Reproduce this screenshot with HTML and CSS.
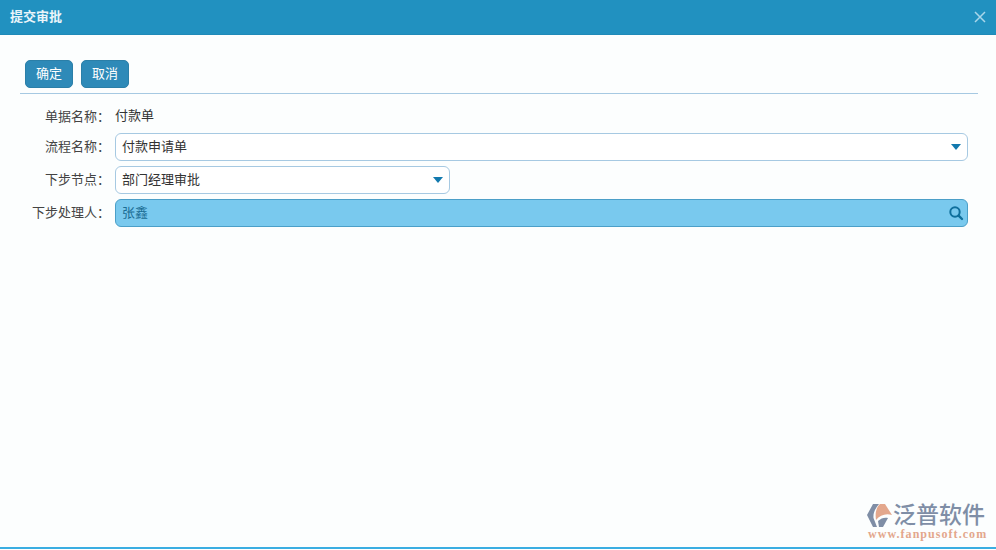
FILE: index.html
```html
<!DOCTYPE html>
<html lang="zh-CN">
<head>
  <meta charset="UTF-8" />
  <title>提交审批</title>
  <link rel="stylesheet" href="styles.css">
</head>
<body>
  <div class="dialog">
    <header class="titlebar">
      <span class="title">提交审批</span>
      <svg class="close" width="12" height="12" viewBox="0 0 12 12"><path d="M1 1 L11 11 M11 1 L1 11" stroke="#a9d6ea" stroke-width="1.5" fill="none"/></svg>
    </header>

    <div class="content">
      <div class="toolbar">
        <button class="btn">确定</button>
        <button class="btn">取消</button>
      </div>

      <div class="form">
        <div class="row row-text">
          <label>单据名称：</label>
          <span class="value">付款单</span>
        </div>
        <div class="row">
          <label>流程名称：</label>
          <div class="field">付款申请单<i class="arrow"></i></div>
        </div>
        <div class="row">
          <label>下步节点：</label>
          <div class="field field-short">部门经理审批<i class="arrow"></i></div>
        </div>
        <div class="row">
          <label>下步处理人：</label>
          <div class="field field-lookup">张鑫
            <svg class="search" width="16" height="16" viewBox="0 0 16 16"><circle cx="7" cy="7" r="4.7" stroke="#0f6f9c" stroke-width="2" fill="none"/><path d="M10.6 10.6 L14 14" stroke="#0f6f9c" stroke-width="2.4" stroke-linecap="round"/></svg>
          </div>
        </div>
      </div>
    </div>

    <div class="logo">
      <div class="logo-top">
        <svg width="27" height="25" viewBox="0 0 27 25">
          <path d="M7 1 H13 C9 6 7 10 7.5 15 L11 24 H7 L1 12 Z" fill="#7f8ea6"/>
          <path d="M14 1 H19 L26 12 C20 10 14 12 10 17 C9 10 10 5 14 1 Z" fill="#e3a78c"/>
          <path d="M12 18 C15 15 19 14 22 15 L17 24 H13 Z" fill="#7f8ea6"/>
        </svg>
        <span class="logo-name">泛普软件</span>
      </div>
      <div class="logo-url">www.fanpusoft.com</div>
    </div>
  </div>
</body>
</html>
```

FILE: styles.css
```css
html, body {
  margin: 0;
  height: 100%;
}
body {
  font-family: "Liberation Sans", "Noto Sans CJK SC", sans-serif;
  font-size: 13px;
  color: #333;
  background: #fff;
}
.dialog {
  position: relative;
  height: 549px;
  box-sizing: border-box;
  background: #fcfefe;
  border-bottom: 2px solid #3aaee2;
  overflow: hidden;
}
.titlebar {
  display: flex;
  align-items: center;
  justify-content: space-between;
  height: 35px;
  box-sizing: border-box;
  padding: 0 10px;
  background: #2191c0;
  border-bottom: 1px solid #1f8ab8;
}
.title {
  color: #eaf5fa;
  font-weight: bold;
  font-size: 13px;
  padding-bottom: 4px;
}
.content {
  padding: 25px 18px 0 20px;
}
.toolbar {
  display: flex;
  gap: 8px;
  padding: 0 0 5px 5px;
  border-bottom: 1px solid #a6c9e2;
}
.btn {
  width: 48px;
  height: 28px;
  padding: 0 0 4px;
  background: #2e8ab8;
  border: 1px solid #2b7fa8;
  border-radius: 5px;
  color: #fff;
  font: inherit;
}
.form {
  display: flex;
  flex-direction: column;
  gap: 5px;
  padding: 6px 10px 0 0;
}
.row {
  display: flex;
  align-items: center;
}
.row-text {
  height: 28px;
}
.row label {
  width: 90px;
  margin-right: 5px;
  padding-bottom: 4px;
  text-align: right;
  color: #444;
  white-space: nowrap;
}
.row-text label {
  padding: 2px 0 0;
}
.value {
  color: #333;
}
.field {
  position: relative;
  flex: 1;
  height: 28px;
  line-height: 26px;
  box-sizing: border-box;
  padding-left: 6px;
  background: #fff;
  border: 1px solid #a6c9e2;
  border-radius: 6px;
  color: #333;
}
.field-short {
  flex: none;
  width: 335px;
}
.field-lookup {
  background: #79c9ee;
  border-color: #4b9fc8;
  color: #1b6d94;
}
.arrow {
  position: absolute;
  right: 6px;
  top: 10px;
  width: 0;
  height: 0;
  border-left: 5px solid transparent;
  border-right: 5px solid transparent;
  border-top: 6px solid #1279ae;
}
.search {
  position: absolute;
  right: 3px;
  top: 5px;
}
.logo {
  position: absolute;
  right: 10px;
  bottom: 7px;
  width: 120px;
}
.logo-top {
  display: flex;
  align-items: center;
}
.logo-name {
  font-size: 23px;
  line-height: 26px;
  color: #7f8ea6;
  font-weight: 500;
  white-space: nowrap;
}
.logo-url {
  margin-left: 2px;
  font-family: "Liberation Serif", serif;
  font-size: 12px;
  font-weight: bold;
  letter-spacing: 1.05px;
  color: #e3a78c;
  line-height: 12px;
  white-space: nowrap;
}
```
